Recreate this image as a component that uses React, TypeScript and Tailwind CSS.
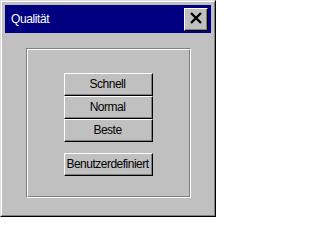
import React from 'react';

const Btn: React.FC<{ label: string }> = ({ label }) => (
  <button className="w-[89px] h-[23px] bg-[#c0c0c0] border border-t-white border-l-white border-r-black border-b-black text-[12px] tracking-[-0.5px] text-black leading-none">
    <span className="flex h-full w-full items-center justify-center border-r border-b border-[#808080]">{label}</span>
  </button>
);

export default function App() {
  return (
    <div className="w-[216px] h-[217px] bg-[#c0c0c0] border border-t-[#dfdfdf] border-l-[#dfdfdf] border-r-black border-b-black font-['Liberation_Sans',Arial,sans-serif]">
      <div className="h-full w-full border border-t-white border-l-white border-r-[#808080] border-b-[#808080] p-[3px] flex flex-col">
        {/* Title bar */}
        <div className="h-[28px] bg-[#000080] flex items-center justify-between pl-[6px] pr-[3px]">
          <span className="text-white text-[12px] tracking-[-0.4px]">Qualität</span>
          <button className="w-[24px] h-[23px] bg-[#c0c0c0] border border-t-white border-l-white border-r-black border-b-black flex">
            <span className="flex h-full w-full items-center justify-center border-r border-b border-[#808080]">
              <svg width="14" height="13" viewBox="0 0 14 13">
                <path d="M2 1 L12 11 M12 1 L2 11" stroke="black" strokeWidth="2.4" />
              </svg>
            </span>
          </button>
        </div>
        {/* Group frame */}
        <div className="flex-1 flex items-start justify-center pt-[15px]">
          <div className="w-[165px] h-[150px] border border-t-[#808080] border-l-[#808080] border-r-white border-b-white">
            <div className="h-full w-full border border-t-white border-l-white border-r-[#808080] border-b-[#808080] flex flex-col items-center pt-[23px]">
              <Btn label="Schnell" />
              <Btn label="Normal" />
              <Btn label="Beste" />
              <div className="h-[11px]" />
              <Btn label="Benutzerdefiniert" />
            </div>
          </div>
        </div>
      </div>
    </div>
  );
}
